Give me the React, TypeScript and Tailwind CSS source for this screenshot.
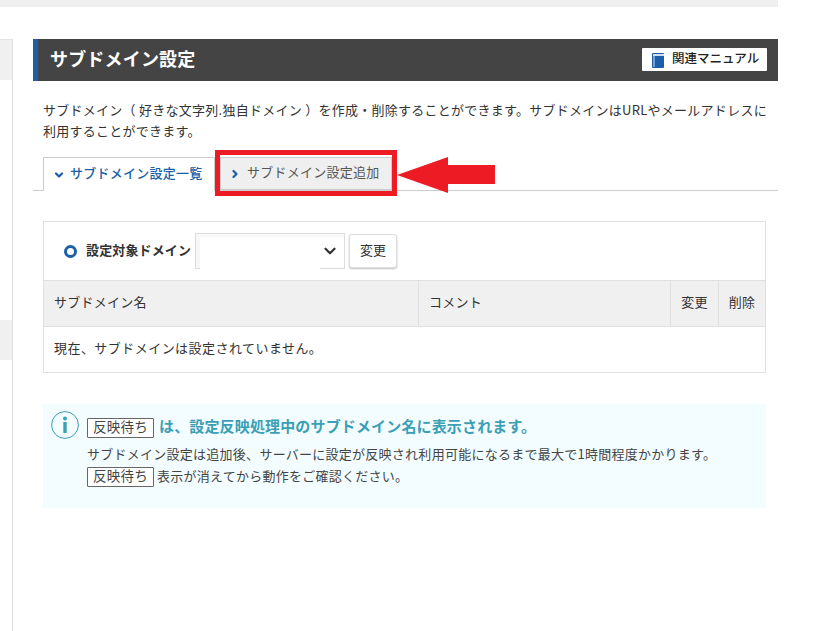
import React from 'react';
import { ChevronDown, ChevronRight } from 'lucide-react';

const font = "font-['Noto_Sans_CJK_JP','Noto_Sans',sans-serif]";

const Badge: React.FC = () => (
  <span className="inline-flex items-center justify-center w-[67px] h-[20px] pb-[2px] border border-[#666] rounded-[1px] bg-white text-[13.5px] leading-none text-[#444]">
    反映待ち
  </span>
);

const Sidebar: React.FC = () => (
  <aside className="w-[13px] mt-[32px] shrink-0 border-r border-[#e2e2e2] h-[592px]">
    <div className="h-[41px] bg-[#f0f0f0] border-t border-[#e2e2e2]" />
    <div className="h-[240px]" />
    <div className="h-[40px] bg-[#f0f0f0]" />
  </aside>
);

const App: React.FC = () => {
  return (
    <div className={`relative w-[823px] h-[631px] overflow-hidden bg-white text-[13px] tracking-[0.02em] text-[#333] ${font}`}>
      <div className="w-[778px] h-[7px] bg-[#efefef]" />
      <div className="flex w-[778px]">
        <Sidebar />
        <main className="ml-[20px] mt-[32px] w-[745px]">
          {/* Title bar */}
          <div className="flex items-center justify-between h-[42px] bg-[#444] border-l-[5px] border-[#1c5fa8] pl-[12px] pr-[11px]">
            <h2 className="text-[18px] tracking-[0.01em] font-bold text-white pb-[4px]">サブドメイン設定</h2>
            <button className="flex items-center w-[125px] h-[23px] mb-[2px] bg-white rounded-[1px] pl-[10px] text-[12.5px] tracking-normal font-medium text-[#222]">
              <svg width="12" height="15" viewBox="0 0 12 15" className="mr-[8px] mt-[2px]">
                <rect x="0" y="0" width="12" height="15" rx="1" fill="#1c5fa8" />
                <rect x="1" y="1" width="11" height="2" fill="#cfe0f2" />
                <rect x="1.5" y="3" width="1" height="11" fill="#cfe0f2" />
              </svg>
              <span className="pb-[2px]">関連マニュアル</span>
            </button>
          </div>

          <p className="ml-[10px] mt-[18px] w-[730px] leading-[21px]">
            サブドメイン（ 好きな文字列.独自ドメイン ）を作成・削除することができます。サブドメインはURLやメールアドレスに利用することができます。
          </p>

          {/* Tabs */}
          <div className="flex h-[34px] mt-[16px] pl-[10px] border-b border-[#ccc]">
            <div className="flex items-center w-[172px] h-[34px] pb-[3px] bg-white border border-b-0 border-[#ccc] pl-[9px] font-medium text-[#1c5fa8]">
              <ChevronDown size={12} strokeWidth={4.5} className="mr-[5px] mt-[3px]" />
              サブドメイン設定一覧
            </div>
            <div className="flex items-center w-[172px] h-[33px] pb-[3px] ml-[5px] bg-[#efefef] border border-[#ccc] pl-[8px] text-[#555]">
              <ChevronRight size={12} strokeWidth={4.5} className="mr-[6px] mt-[3px] text-[#1c5fa8]" />
              サブドメイン設定追加
            </div>
          </div>

          {/* Domain table */}
          <div className="ml-[10px] mt-[30px] w-[723px] border border-[#e0e0e0]">
            <div className="flex items-center h-[58px] pl-[20px]">
              <span className="w-[13px] h-[13px] rounded-full border-[3.5px] border-[#1c5fa8] mr-[9px]" />
              <span className="font-bold tracking-[0.01em] pb-[3px] mr-[4px]">設定対象ドメイン</span>
              <div className="relative w-[150px] h-[36px] border border-[#ddd] bg-white">
                <div className="absolute left-0 top-0 w-full h-[3px] bg-[#f7f7f7]" />
                <div className="absolute left-0 top-0 w-[4px] h-full bg-[#f7f7f7]" />
                <div className="absolute left-[4px] bottom-[-1px] w-[120px] h-[1px] bg-white" />
                <ChevronDown size={18} strokeWidth={3} className="absolute right-[5px] top-[8px] text-[#333]" />
              </div>
              <button className="ml-[4px] w-[48px] h-[34px] pb-[2px] bg-white border border-[#ddd] rounded-[3px] shadow-[0_1px_2px_rgba(0,0,0,0.25)] tracking-normal">
                変更
              </button>
            </div>
            <div className="flex h-[47px] bg-[#f0f0f0] border-y border-[#e0e0e0] items-center">
              <div className="flex items-center w-[375px] h-full pb-[3px] pl-[10px] border-r border-[#e0e0e0]">サブドメイン名</div>
              <div className="flex items-center w-[252px] h-full pb-[3px] pl-[10px] border-r border-[#e0e0e0]">コメント</div>
              <div className="flex items-center justify-center w-[48px] h-full pb-[3px] border-r border-[#e0e0e0]">変更</div>
              <div className="flex items-center justify-center flex-1 h-full pb-[3px]">削除</div>
            </div>
            <div className="flex items-center h-[45px] pb-[4px] pl-[10px] tracking-[0.035em]">現在、サブドメインは設定されていません。</div>
          </div>

          {/* Notice */}
          <div className="ml-[10px] mt-[31px] w-[723px] h-[104px] bg-[#f3fdff] flex pl-[8px] pt-[7px]">
            <svg width="28" height="28" viewBox="0 0 28 28" className="shrink-0">
              <circle cx="14" cy="14" r="13.4" fill="none" stroke="#3b9fb5" strokeWidth="1" />
              <circle cx="14" cy="7.5" r="2" fill="#3b9fb5" />
              <rect x="12.3" y="11" width="3.4" height="11" fill="#3b9fb5" />
            </svg>
            <div className="ml-[8px]">
              <div className="flex items-center h-[28px] mt-[3px] gap-[5px]">
                <Badge />
                <span className="text-[15px] tracking-[0.01em] font-bold text-[#3b9fb5] pb-[4px]">は、設定反映処理中のサブドメイン名に表示されます。</span>
              </div>
              <div className="mt-[1px] leading-[22px] text-[#444]">
                <div>サブドメイン設定は追加後、サーバーに設定が反映され利用可能になるまで最大で1時間程度かかります。</div>
                <div className="flex items-center gap-[3px]"><Badge /><span className="pb-[2px]">表示が消えてから動作をご確認ください。</span></div>
              </div>
            </div>
          </div>
        </main>
      </div>

      {/* Annotation: red frame and arrow over the add tab */}
      <div className="absolute left-[215px] top-[150px] w-[182px] h-[46px] border-[5px] border-[#ed1c24]" />
      <svg width="100" height="38" viewBox="0 0 100 38" className="absolute left-[397px] top-[157px]">
        <polygon points="0,18 51,0 51,8 98,8 98,27 51,27 51,36" fill="#ed1c24" />
      </svg>
    </div>
  );
};

export default App;
